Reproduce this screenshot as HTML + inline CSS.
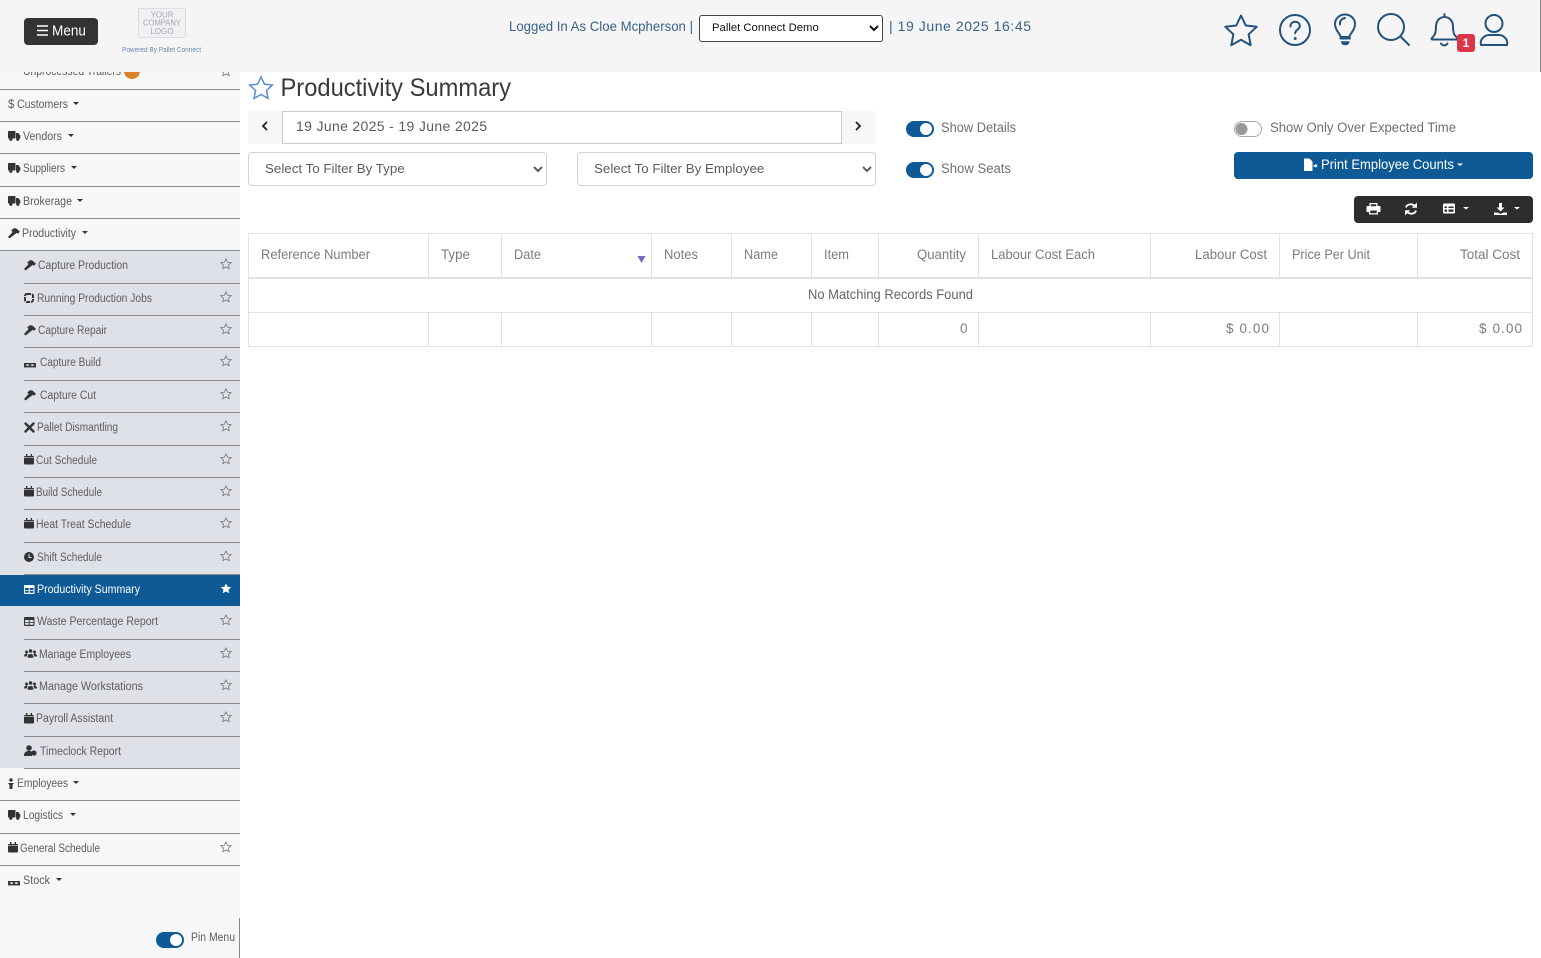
<!DOCTYPE html>
<html lang="en"><head><meta charset="utf-8"><title>Productivity Summary</title>
<style>
html,body{margin:0;padding:0;background:#fff;width:1541px;height:958px;overflow:hidden}
body{position:relative;font-family:"Liberation Sans",sans-serif}
svg.page{position:absolute;left:0;top:0}
select{position:absolute;box-sizing:border-box;background:#fff;font-family:"Liberation Sans",sans-serif;margin:0}
.f{border:1px solid #ced4da;border-radius:4px;top:152px;width:299px;height:34px;padding:0 0 2px 12px;font-size:13.35px;color:#5c5c5c}
.c{left:699px;top:15px;width:184px;height:27px;border:1px solid #444;border-radius:3px;padding:0 0 2px 8px;font-size:11.3px;color:#111}
text{font-family:"Liberation Sans",sans-serif}
.s text{font-size:11.5px;fill:#5c5c5c}
.h text{font-size:13.5px;fill:#7c7c7c}
</style></head><body>
<svg class="page" width="1541" height="958" viewBox="0 0 1541 958" xmlns="http://www.w3.org/2000/svg">
<defs>
<path id="star" d="M12 2.5l2.9 6.2 6.8.8-5 4.6 1.3 6.7-6-3.3-6 3.3 1.3-6.7-5-4.6 6.8-.8z"/>
<g id="st"><use href="#star" transform="translate(-6.5,-6.5) scale(.54)" fill="none" stroke="#666" stroke-width="1.3"/></g>
<g id="hammer" fill="#333"><path d="M0 10 4.600 5 3.200 3.500 5.500 1.500c1.900-.6 3.600.2 5 2L12 4.600 10 6.800 8.700 5.900 1.500 11.500z"/></g>
<g id="truck" fill="#333"><rect x="0" y="0" width="7.5" height="7.5" rx=".7"/><path d="M8 2h2.300l2 2.600V7.500H8z"/><circle cx="2.800" cy="8.300" r="1.600"/><circle cx="9.800" cy="8.300" r="1.600"/></g>
<g id="cal" fill="#333"><rect x="0" y="2" width="10" height="8.500" rx="1"/><rect x="2" y="0" width="1.400" height="3"/><rect x="6.600" y="0" width="1.400" height="3"/><rect x="0" y="3.400" width="10" height=".6" fill="#dee2e8"/></g>
<g id="tbl"><rect x="0" y="0" width="10.5" height="9" rx="1" fill="currentColor"/><path d="M1 3h3.800v2H1zM5.700 3h3.800v2H5.700zM1 5.800h3.800v2H1zM5.700 5.800h3.800v2H5.700z" fill="var(--b)"/></g>
<g id="users" fill="#333"><circle cx="2.500" cy="3" r="1.500"/><circle cx="6.500" cy="2" r="1.800"/><circle cx="10.500" cy="3" r="1.500"/><path d="M0 7.500c0-2 1-2.700 2.400-2.700s1.400.4 1.400.4-1 1-1 2.300zM3.600 8.800c0-3 1.200-3.800 2.900-3.800s2.900.8 2.900 3.800zM13 7.500c0-2-1-2.700-2.400-2.700s-1.400.4-1.400.4 1 1 1 2.300z"/></g>
<g id="pal" fill="#333"><rect x="0" y="0" width="12" height="1.300"/><rect x="0" y="3" width="12" height="1.400"/><rect x="0" y="1.300" width="2.500" height="1.700"/><rect x="4.700" y="1.300" width="2.500" height="1.700"/><rect x="9.500" y="1.300" width="2.500" height="1.700"/></g>
<path id="car" d="M0 0h6L3 3z"/>
</defs>

<!-- sidebar base -->
<rect x="0" y="72" width="240" height="886" fill="#f7f7f7"/>
<rect x="0" y="250" width="240" height="518" fill="#dee2e8"/>

<!-- clipped first entry -->
<g class="s">
<text x="23" y="75" textLength="98" lengthAdjust="spacingAndGlyphs">Unprocessed Trailers</text>
<circle cx="132" cy="71" r="8" fill="#d9822b"/>
<use href="#st" x="226" y="71"/>
</g>

<!-- header -->
<rect x="0" y="0" width="1541" height="72" fill="#f5f5f5"/>
<rect x="1540" y="0" width="1" height="72" fill="#888"/>
<rect x="24" y="18" width="74" height="27" rx="4" fill="#333"/>
<path d="M37 26h11M37 30.500h11M37 35h11" stroke="#fff" stroke-width="1.500"/>
<text x="52" y="35.500" font-size="15" fill="#fff" textLength="34" lengthAdjust="spacingAndGlyphs">Menu</text>
<rect x="138.500" y="8.500" width="47" height="29" fill="#f0f1f2" stroke="#dcdfe2"/>
<g font-size="8" fill="#a2a9b4" text-anchor="middle">
<text x="162" y="17.500">YOUR</text><text x="162" y="25.500" textLength="38" lengthAdjust="spacingAndGlyphs">COMPANY</text><text x="162" y="34">LOGO</text></g>
<text x="122" y="52" font-size="7" fill="#6a88ad" textLength="79" lengthAdjust="spacingAndGlyphs">Powered By Pallet Connect</text>
<text x="509" y="31" font-size="14" fill="#3a628c" textLength="184" lengthAdjust="spacingAndGlyphs">Logged In As Cloe Mcpherson  |</text>
<text x="889" y="31" font-size="14" fill="#3a628c" textLength="142">| 19 June 2025 16:45</text>

<!-- header icons -->
<g fill="none" stroke="#24527c" stroke-width="2" stroke-linejoin="round" stroke-linecap="round">
<path d="M1241 15.500l4.700 10 11 1.300-8.100 7.500 2.100 10.900-9.700-5.400-9.700 5.400 2.100-10.900-8.100-7.500 11-1.300z"/>
<circle cx="1295" cy="30" r="15"/>
<path d="M1290.500 26.500c0-3 2-4.700 4.700-4.700s4.600 1.700 4.600 4.200c0 3.500-4.600 3.600-4.600 7.300"/>
<path d="M1340.500 37c0-3.500-5.500-6-5.500-13 0-5.500 4.500-9.500 10-9.500s10 4 10 9.500c0 7-5.500 9.500-5.500 13zM1345 18c-3 .3-5.500 3-5 6.500"/>
<path d="M1340.500 38.500h9.500"/>
<circle cx="1391" cy="27" r="13"/><path d="M1400.500 36.500l8.500 8.500"/>
<path d="M1431.500 38.500c3-3 4.500-5 4.500-12 0-5.500 3.500-9.500 8.500-9.500s8.500 4 8.500 9.500c0 7 1.500 9 5 12 .5.800 0 1-1 1h-24.500c-1 0-1.200-.5-.5-1zM1441 43.500c1.500 2.500 5 2.500 6.500 0M1444.500 17v-3"/>
<circle cx="1494" cy="23.500" r="8.500"/><path d="M1481 45c-1.500-6 4-10 8-10h10c4 0 9.500 4 8 10z"/>
</g>
<path d="M1341 41.200h8.500c0 2.800-1.700 4-4.250 4s-4.250-1.200-4.250-4z" fill="#24527c"/>
<circle cx="1295.200" cy="38.500" r="1.500" fill="#24527c"/>
<rect x="1457" y="34" width="18" height="18" rx="3" fill="#dc3545"/>
<text x="1466" y="47" font-size="12" font-weight="bold" fill="#fff" text-anchor="middle">1</text>

<!-- sidebar lines -->
<g fill="#8b8b8b">
<rect x="0" y="89" width="240" height="1"/><rect x="0" y="121" width="240" height="1"/><rect x="0" y="153" width="240" height="1"/><rect x="0" y="186" width="240" height="1"/><rect x="0" y="218" width="240" height="1"/><rect x="0" y="250" width="240" height="1"/>
<rect x="24" y="283" width="216" height="1"/><rect x="24" y="315" width="216" height="1"/><rect x="24" y="347" width="216" height="1"/><rect x="24" y="380" width="216" height="1"/><rect x="24" y="412" width="216" height="1"/><rect x="24" y="445" width="216" height="1"/><rect x="24" y="477" width="216" height="1"/><rect x="24" y="509" width="216" height="1"/><rect x="24" y="542" width="216" height="1"/><rect x="24" y="574" width="216" height="1"/><rect x="24" y="639" width="216" height="1"/><rect x="24" y="671" width="216" height="1"/><rect x="24" y="703" width="216" height="1"/><rect x="24" y="736" width="216" height="1"/><rect x="24" y="768" width="216" height="1"/>
<rect x="0" y="800" width="240" height="1"/><rect x="0" y="833" width="240" height="1"/><rect x="0" y="865" width="240" height="1"/>
</g>
<rect x="0" y="575" width="240" height="31" fill="#0d5a96"/>

<!-- sidebar text -->
<g class="s">
<text x="8" y="108" textLength="6">$</text><text x="17" y="108" textLength="51" lengthAdjust="spacingAndGlyphs">Customers</text>
<text x="23" y="140" textLength="39" lengthAdjust="spacingAndGlyphs">Vendors</text>
<text x="23" y="172" textLength="42" lengthAdjust="spacingAndGlyphs">Suppliers</text>
<text x="23" y="205" textLength="49" lengthAdjust="spacingAndGlyphs">Brokerage</text>
<text x="22" y="237" textLength="54" lengthAdjust="spacingAndGlyphs">Productivity</text>
<text x="38" y="269" textLength="90" lengthAdjust="spacingAndGlyphs">Capture Production</text>
<text x="37" y="302" textLength="115" lengthAdjust="spacingAndGlyphs">Running Production Jobs</text>
<text x="38" y="334" textLength="69" lengthAdjust="spacingAndGlyphs">Capture Repair</text>
<text x="40" y="366" textLength="61" lengthAdjust="spacingAndGlyphs">Capture Build</text>
<text x="40" y="399" textLength="56" lengthAdjust="spacingAndGlyphs">Capture Cut</text>
<text x="37" y="431" textLength="81" lengthAdjust="spacingAndGlyphs">Pallet Dismantling</text>
<text x="36" y="464" textLength="61" lengthAdjust="spacingAndGlyphs">Cut Schedule</text>
<text x="36" y="496" textLength="66" lengthAdjust="spacingAndGlyphs">Build Schedule</text>
<text x="36" y="528" textLength="95" lengthAdjust="spacingAndGlyphs">Heat Treat Schedule</text>
<text x="37" y="561" textLength="65" lengthAdjust="spacingAndGlyphs">Shift Schedule</text>
<text x="37" y="593" textLength="103" lengthAdjust="spacingAndGlyphs" style="fill:#fff">Productivity Summary</text>
<text x="37" y="625" textLength="121" lengthAdjust="spacingAndGlyphs">Waste Percentage Report</text>
<text x="39" y="658" textLength="92" lengthAdjust="spacingAndGlyphs">Manage Employees</text>
<text x="39" y="690" textLength="104" lengthAdjust="spacingAndGlyphs">Manage Workstations</text>
<text x="36" y="722" textLength="77" lengthAdjust="spacingAndGlyphs">Payroll Assistant</text>
<text x="40" y="755" textLength="81" lengthAdjust="spacingAndGlyphs">Timeclock Report</text>
<text x="17" y="787" textLength="51" lengthAdjust="spacingAndGlyphs">Employees</text>
<text x="23" y="819" textLength="40" lengthAdjust="spacingAndGlyphs">Logistics</text>
<text x="20" y="852" textLength="80" lengthAdjust="spacingAndGlyphs">General Schedule</text>
<text x="23" y="884" textLength="27" lengthAdjust="spacingAndGlyphs">Stock</text>
<text x="191" y="941" textLength="44" lengthAdjust="spacingAndGlyphs">Pin Menu</text>
</g>

<!-- carets -->
<g fill="#333">
<use href="#car" x="73" y="102"/><use href="#car" x="68" y="134"/><use href="#car" x="71" y="166"/><use href="#car" x="77" y="199"/><use href="#car" x="82" y="231"/><use href="#car" x="73" y="781"/><use href="#car" x="70" y="813"/><use href="#car" x="56" y="878"/>
</g>

<!-- sidebar icons -->
<use href="#truck" x="8" y="131"/>
<use href="#truck" x="8" y="163"/>
<use href="#truck" x="8" y="196"/>
<use href="#hammer" x="8" y="227"/>
<use href="#hammer" x="24" y="259"/>
<g transform="translate(24,293)" fill="none" stroke="#333" stroke-width="2"><rect x="1" y="1" width="8" height="8" rx="2" stroke-dasharray="4 1"/></g>
<use href="#hammer" x="24" y="324"/>
<use href="#pal" x="24" y="363"/>
<use href="#hammer" x="24" y="389"/>
<g transform="translate(24,422)" stroke="#333" stroke-width="2.400" stroke-linecap="round"><path d="M1.500 1.500l8 8M9.500 1.500l-8 8"/></g>
<use href="#cal" x="24" y="454"/>
<use href="#cal" x="24" y="486"/>
<use href="#cal" x="24" y="518"/>
<circle cx="29" cy="557" r="5" fill="#333"/><path d="M29 554v3.500h2.500" stroke="#dee2e8" fill="none"/>
<g style="color:#fff;--b:#0d5a96"><use href="#tbl" x="24" y="585"/></g>
<g style="color:#333;--b:#dee2e8"><use href="#tbl" x="24" y="617"/></g>
<use href="#users" x="24" y="649"/>
<use href="#users" x="24" y="681"/>
<use href="#cal" x="24" y="713"/>
<g fill="#333"><circle cx="29" cy="748" r="2.800"/><path d="M24 756c0-4 2-5 5-5s3 1 3 1v4z"/><circle cx="34" cy="753" r="2.600"/></g>
<g fill="#333"><circle cx="11" cy="780" r="1.700"/><path d="M8 783h6l-1.500 2v4h-3v-4z"/></g>
<use href="#truck" x="8" y="810"/>
<g><use href="#cal" x="8" y="842"/></g>
<use href="#pal" x="8" y="881"/>

<!-- sidebar stars -->
<use href="#st" x="226" y="264"/><use href="#st" x="226" y="297"/><use href="#st" x="226" y="329"/><use href="#st" x="226" y="361"/><use href="#st" x="226" y="394"/><use href="#st" x="226" y="426"/><use href="#st" x="226" y="459"/><use href="#st" x="226" y="491"/><use href="#st" x="226" y="523"/><use href="#st" x="226" y="556"/>
<use href="#star" transform="translate(219.500,582) scale(.54)" fill="#fff"/>
<use href="#st" x="226" y="620"/><use href="#st" x="226" y="653"/><use href="#st" x="226" y="685"/><use href="#st" x="226" y="717"/><use href="#st" x="226" y="847"/>

<!-- pin menu -->
<rect x="239" y="918" width="1" height="40" fill="#888"/>
<rect x="156" y="932" width="28" height="16" rx="8" fill="#0d5a96"/><circle cx="176" cy="940" r="6" fill="#fff"/>

<!-- title -->
<use href="#star" transform="translate(247,74) scale(1.170)" fill="none" stroke="#5b8dcf" stroke-width="1.300"/>
<text x="280.500" y="96" font-size="25" fill="#3a3a3a" textLength="230.500" lengthAdjust="spacingAndGlyphs">Productivity Summary</text>

<!-- date range -->
<rect x="248" y="111" width="34" height="33" fill="#f5f7f9"/>
<rect x="842" y="111" width="34" height="33" fill="#f5f7f9"/>
<rect x="282.500" y="111.500" width="559" height="32" fill="#fff" stroke="#ccc"/>
<path d="M267 122l-4 4 4 4M856 122l4 4-4 4" fill="none" stroke="#222" stroke-width="1.800"/>
<text x="296" y="131" font-size="14" fill="#5c5c5c" textLength="191">19 June 2025 - 19 June 2025</text>

<!-- toggles -->
<rect x="906" y="121" width="28" height="16" rx="8" fill="#0d5a96"/><circle cx="926" cy="129" r="6" fill="#fff"/>
<rect x="906" y="162" width="28" height="16" rx="8" fill="#0d5a96"/><circle cx="926" cy="170" r="6" fill="#fff"/>
<rect x="1234.500" y="121.500" width="27" height="15" rx="7.500" fill="#fff" stroke="#aaa"/><circle cx="1241.500" cy="129" r="6" fill="#999"/>
<text x="941" y="132" font-size="13.500" fill="#707070" textLength="75" lengthAdjust="spacingAndGlyphs">Show Details</text>
<text x="941" y="173" font-size="13.500" fill="#707070" textLength="70" lengthAdjust="spacingAndGlyphs">Show Seats</text>
<text x="1270" y="132" font-size="13.500" fill="#707070" textLength="186" lengthAdjust="spacingAndGlyphs">Show Only Over Expected Time</text>

<!-- print button -->
<rect x="1234" y="152" width="299" height="27" rx="4" fill="#0d5a96"/>
<path d="M1304 158.500h5.500l3 3v9.500h-8.500zM1313.500 165h2v-1.500l2 2.300-2 2.300v-1.500h-2z" fill="#fff"/>
<text x="1321" y="169" font-size="14" fill="#fff" textLength="133" lengthAdjust="spacingAndGlyphs">Print Employee Counts</text>
<path d="M1457 163.500h6l-3 2.500z" fill="#fff"/>

<!-- toolbar -->
<rect x="1354" y="196" width="179" height="27" rx="4" fill="#2d2d2d"/>
<g fill="#fff">
<path d="M1369.500 203h8v3h2a1 1 0 0 1 1 1v5h-2.500v2.500h-9V212h-2.500v-5a1 1 0 0 1 1-1h2zM1370.800 204.300v2h5.400v-2zM1370.300 210.500v2.700h6.400v-2.700z" fill-rule="evenodd"/>
<path d="M1444 203.500h10a1 1 0 0 1 1 1v8a1 1 0 0 1-1 1h-10a1 1 0 0 1-1-1v-8a1 1 0 0 1 1-1zM1444.500 206.500v1.500h2.500v-1.500zM1448.500 206.500v1.500h5v-1.500zM1444.500 209.500v2.300h2.500v-2.300zM1448.500 209.500v2.300h5v-2.300z" fill-rule="evenodd"/>
<path d="M1463 207h6l-3 2.500zM1514 207h6l-3 2.500z"/>
<path d="M1499 203h3v4.500h2.500l-4 4-4-4h2.500zM1494 212.500h3.500l3 1.500 3-1.500h3.500v2.500h-13z"/>
<path d="M1417 202.500v5.200h-5.200zM1405 215.500v-5.200h5.200z"/>
</g>
<path d="M1406 207.500c.8-3.300 5.800-4.500 9-1.300M1416 210.500c-.8 3.300-5.800 4.500-9 1.300" fill="none" stroke="#fff" stroke-width="1.800"/>

<!-- table -->
<g fill="none" stroke="#e2e2e2">
<path d="M248.500 233.500H1532.500V346.500H248.500zM248.500 312.500H1532.500"/>
<path d="M428.500 233.500V277M501.500 233.500V277M651.500 233.500V277M731.500 233.500V277M811.500 233.500V277M878.500 233.500V277M978.500 233.500V277M1150.500 233.500V277M1279.500 233.500V277M1417.500 233.500V277"/>
<path d="M428.500 312.500V346M501.500 312.500V346M651.500 312.500V346M731.500 312.500V346M811.500 312.500V346M878.500 312.500V346M978.500 312.500V346M1150.500 312.500V346M1279.500 312.500V346M1417.500 312.500V346"/>
</g>
<rect x="248" y="277" width="1285" height="2" fill="#e2e2e2"/>
<g class="h">
<text x="261" y="259" textLength="109" lengthAdjust="spacingAndGlyphs">Reference Number</text>
<text x="441" y="259" textLength="29" lengthAdjust="spacingAndGlyphs">Type</text>
<text x="514" y="259" textLength="27" lengthAdjust="spacingAndGlyphs">Date</text>
<text x="664" y="259" textLength="34" lengthAdjust="spacingAndGlyphs">Notes</text>
<text x="744" y="259" textLength="34" lengthAdjust="spacingAndGlyphs">Name</text>
<text x="824" y="259" textLength="25" lengthAdjust="spacingAndGlyphs">Item</text>
<text x="917" y="259" textLength="49" lengthAdjust="spacingAndGlyphs">Quantity</text>
<text x="991" y="259" textLength="104" lengthAdjust="spacingAndGlyphs">Labour Cost Each</text>
<text x="1195" y="259" textLength="72" lengthAdjust="spacingAndGlyphs">Labour Cost</text>
<text x="1292" y="259" textLength="78" lengthAdjust="spacingAndGlyphs">Price Per Unit</text>
<text x="1460" y="259" textLength="60" lengthAdjust="spacingAndGlyphs">Total Cost</text>
<text x="808" y="299" textLength="165" lengthAdjust="spacingAndGlyphs" style="fill:#666">No Matching Records Found</text>
<text x="960" y="333" textLength="8">0</text>
<text x="1226" y="333" textLength="43">$ 0.00</text>
<text x="1479" y="333" textLength="43">$ 0.00</text>
</g>
<path d="M637.500 256h8l-4 7z" fill="#6f6fc0"/>
</svg>

<select class="c"><option>Pallet Connect Demo</option></select>
<select class="f" style="left:248px"><option>Select To Filter By Type</option></select>
<select class="f" style="left:577px"><option>Select To Filter By Employee</option></select>
</body></html>
